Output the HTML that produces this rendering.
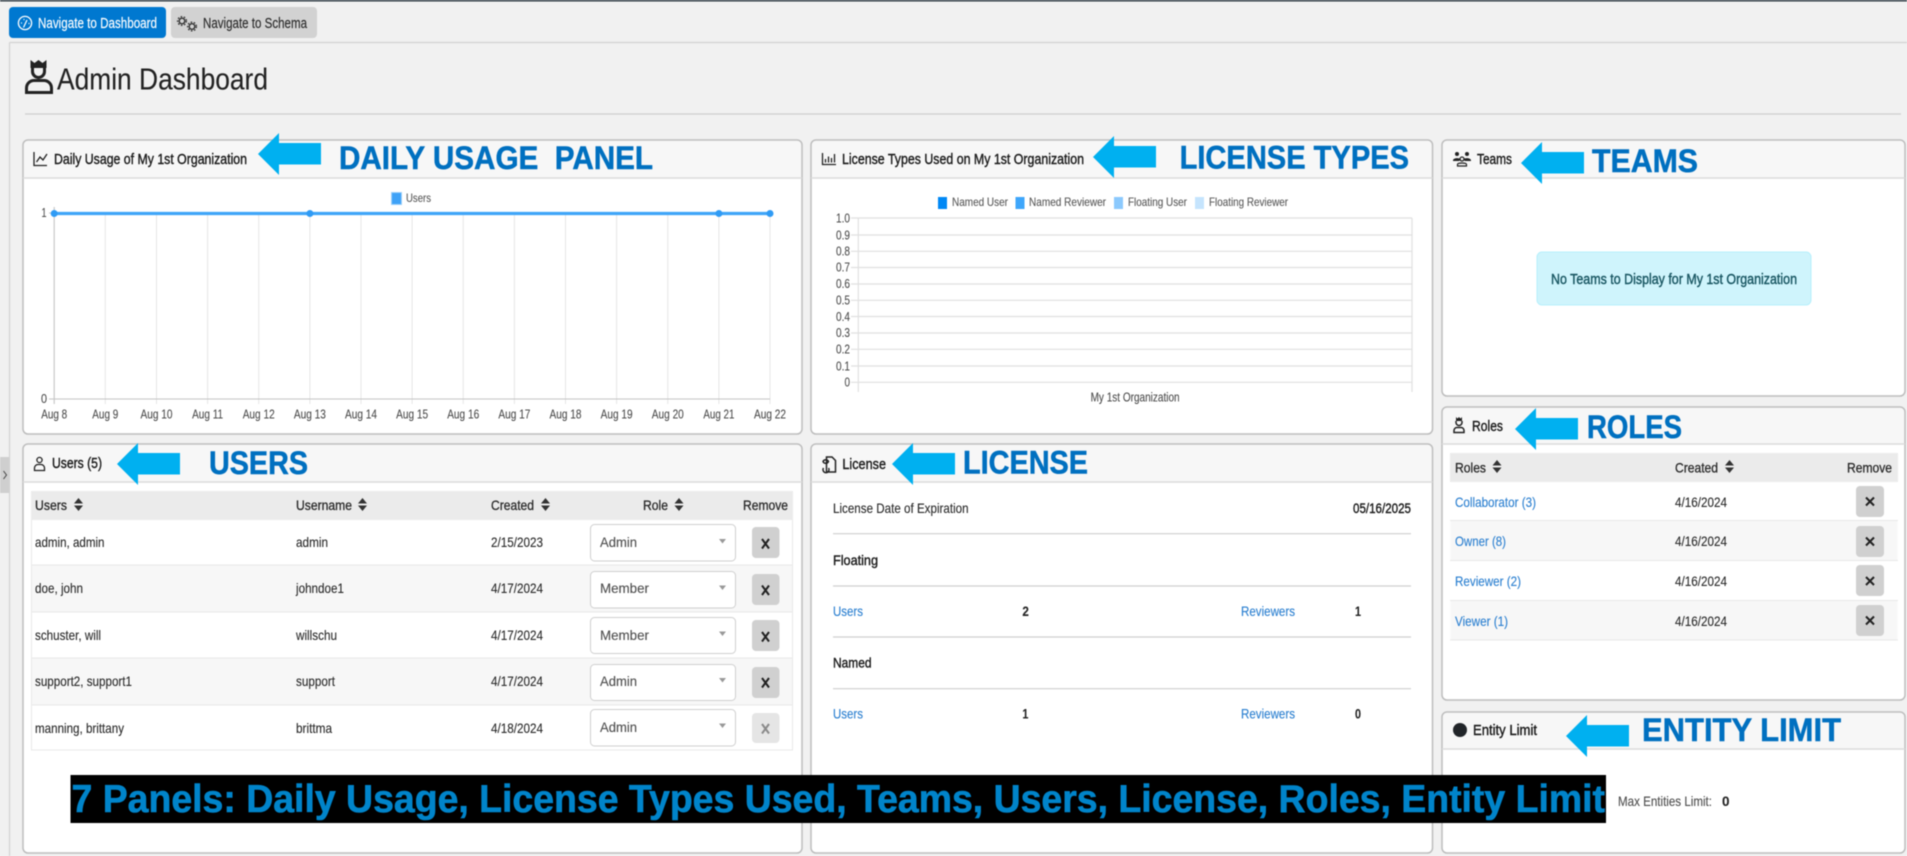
<!DOCTYPE html>
<html>
<head>
<meta charset="utf-8">
<title>Admin Dashboard</title>
<style>
html,body{margin:0;padding:0;width:1907px;height:856px;overflow:hidden;background:#f1f1f1}
svg{display:block;filter:blur(.4px)}
text{font-family:"Liberation Sans",Arial,sans-serif;font-size:14px;fill:#2b2b2b;stroke:#2b2b2b;stroke-width:.12px}
.t{font-size:14.5px;fill:#1c1c1c;stroke:#1c1c1c;stroke-width:.38px}
.nav{font-size:14.5px;stroke-width:.15px}
.lb{font-size:32px;font-weight:bold;fill:#0070c0;stroke:#0070c0;stroke-width:.5px}
.tk{font-size:12.5px;fill:#4d4d4d;stroke:#4d4d4d;stroke-width:.1px}
.tk2{font-size:12.5px;fill:#4d4d4d;stroke:#4d4d4d;stroke-width:.1px}
.th{font-size:14px;fill:#2b2b2b;stroke:#2b2b2b;stroke-width:.3px}
.a{fill:#2a7fd0;stroke:#2a7fd0}
.b{font-weight:bold;fill:#222}
.sel{fill:#4f4f4f;stroke:#4f4f4f}
.pb{fill:#fff;stroke:#bdbdbd;stroke-width:1.5}
.ph{fill:#f7f7f7}
.hl{stroke:#dcdcdc;stroke-width:1.5}
.g{stroke:#e6e6e6;stroke-width:1}
.g2{stroke:#e0e0e0;stroke-width:1.2}
.ic{fill:none;stroke:#222;stroke-width:1.3}
.x{stroke:#222;stroke-width:2}
.rl{stroke:#e9e9e9;stroke-width:1}
.hr{stroke:#cfcfcf;stroke-width:1.2}
.arrow{fill:#00b0f0}
</style>
</head>
<body>
<svg xmlns="http://www.w3.org/2000/svg" width="1907" height="856" viewBox="0 0 1907 856">
<rect width="1907" height="856" fill="#f1f1f1"/>
<rect width="1907" height="1.5" fill="#2f3a44"/>
<path d="M9.5 42.5H1907M9.5 42.5V856" stroke="#d2d2d2" stroke-width="1.2" fill="none"/>
<rect x="0" y="457" width="9" height="36" fill="#cfcfcf"/>
<path d="M3.5 471l3 4-3 4" fill="none" stroke="#444" stroke-width="1"/>

<!-- nav -->
<rect x="9" y="7" width="157" height="31" rx="4" fill="#0078d0"/>
<rect x="171" y="7" width="146" height="31" rx="4" fill="#d2d2d2"/>
<circle cx="25" cy="23" r="6.6" fill="none" stroke="#fff" stroke-width="1.3"/>
<path d="M23.500 27.500l3.500-7.500M21 23h1M23.500 19.500h1M28.500 23.500h1" stroke="#fff" stroke-width="1.2" fill="none"/>
<circle cx="182" cy="21" r="2.800" fill="none" stroke="#333" stroke-width="1.400"/>
<circle cx="182" cy="21" r="4.400" fill="none" stroke="#333" stroke-width="1.300" stroke-dasharray="1.600 1.600"/>
<circle cx="192" cy="26.500" r="2.800" fill="none" stroke="#333" stroke-width="1.400"/>
<circle cx="192" cy="26.500" r="4.400" fill="none" stroke="#333" stroke-width="1.300" stroke-dasharray="1.600 1.600"/>
<text class="nav" x="38" y="28" textLength="119" lengthAdjust="spacingAndGlyphs" style="fill:#fff;stroke:#fff">Navigate to Dashboard</text>
<text class="nav" x="203" y="28" textLength="104" lengthAdjust="spacingAndGlyphs">Navigate to Schema</text>

<!-- heading -->
<path d="M30.500 60l4 3 4-3 4 3 4-3v8h-16z" fill="#222"/>
<path d="M32.500 68v3.500a6 6 0 0 0 12 0V68" fill="none" stroke="#222" stroke-width="3"/>
<path d="M26.500 92.500V88a7.500 7.500 0 0 1 7.500-7.500h10a7.500 7.500 0 0 1 7.500 7.500v4.500z" fill="none" stroke="#222" stroke-width="3"/>
<text x="57" y="89.500" textLength="211" lengthAdjust="spacingAndGlyphs" style="font-size:31px;fill:#222;stroke:#222;stroke-width:.1px">Admin Dashboard</text>
<line x1="25" y1="114" x2="1901" y2="114" stroke="#cdcdcd" stroke-width="1.2"/>

<!-- Panel: daily usage -->
<rect class="pb" x="23" y="140" width="779" height="294" rx="5"/>
<path class="ph" d="M24 178V145a4 4 0 0 1 4-4H797a4 4 0 0 1 4 4V178z"/>
<line class="hl" x1="23" y1="178" x2="802" y2="178"/>
<path class="ic" d="M34 152V165.500H47M36.500 162l3.500-5 3 3 4-6"/>
<text class="t" x="54" y="164" textLength="193" lengthAdjust="spacingAndGlyphs">Daily Usage of My 1st Organization</text>
<rect x="391.500" y="192.500" width="10" height="12" fill="#3fa2f7" stroke="#9ed0f9"/>
<text x="406" y="202" textLength="25" lengthAdjust="spacingAndGlyphs" style="font-size:12px;fill:#5a5a5a;stroke:#5a5a5a">Users</text>
<g class="g">
<line x1="105.300" y1="213" x2="105.300" y2="404"/><line x1="156.500" y1="213" x2="156.500" y2="404"/><line x1="207.600" y1="213" x2="207.600" y2="404"/><line x1="258.700" y1="213" x2="258.700" y2="404"/><line x1="309.900" y1="213" x2="309.900" y2="404"/><line x1="361" y1="213" x2="361" y2="404"/><line x1="412.100" y1="213" x2="412.100" y2="404"/><line x1="463.200" y1="213" x2="463.200" y2="404"/><line x1="514.400" y1="213" x2="514.400" y2="404"/><line x1="565.500" y1="213" x2="565.500" y2="404"/><line x1="616.600" y1="213" x2="616.600" y2="404"/><line x1="667.800" y1="213" x2="667.800" y2="404"/><line x1="718.900" y1="213" x2="718.900" y2="404"/><line x1="770" y1="213" x2="770" y2="404"/>
</g>
<path d="M54.200 207V404M49 399H770M49 213H54" stroke="#c4c4c4" stroke-width="1.100" fill="none"/>
<line x1="54.200" y1="213.500" x2="770" y2="213.500" stroke="#3fa5f8" stroke-width="3.200"/>
<circle cx="54.200" cy="213.500" r="3.500" fill="#2f9bf5"/><circle cx="309.900" cy="213.500" r="3.500" fill="#2f9bf5"/><circle cx="718.900" cy="213.500" r="3.500" fill="#2f9bf5"/><circle cx="770" cy="213.500" r="3.500" fill="#2f9bf5"/>
<text class="tk" x="41.500" y="217" textLength="5" lengthAdjust="spacingAndGlyphs">1</text><text class="tk" x="41" y="403" textLength="6" lengthAdjust="spacingAndGlyphs">0</text>
<g text-anchor="middle">
<text class="tk" x="54.200" y="418.500" textLength="26" lengthAdjust="spacingAndGlyphs">Aug 8</text>
<text class="tk" x="105.300" y="418.500" textLength="26" lengthAdjust="spacingAndGlyphs">Aug 9</text>
<text class="tk" x="156.500" y="418.500" textLength="32" lengthAdjust="spacingAndGlyphs">Aug 10</text>
<text class="tk" x="207.600" y="418.500" textLength="31" lengthAdjust="spacingAndGlyphs">Aug 11</text>
<text class="tk" x="258.700" y="418.500" textLength="32" lengthAdjust="spacingAndGlyphs">Aug 12</text>
<text class="tk" x="309.900" y="418.500" textLength="32" lengthAdjust="spacingAndGlyphs">Aug 13</text>
<text class="tk" x="361" y="418.500" textLength="32" lengthAdjust="spacingAndGlyphs">Aug 14</text>
<text class="tk" x="412.100" y="418.500" textLength="32" lengthAdjust="spacingAndGlyphs">Aug 15</text>
<text class="tk" x="463.200" y="418.500" textLength="32" lengthAdjust="spacingAndGlyphs">Aug 16</text>
<text class="tk" x="514.400" y="418.500" textLength="32" lengthAdjust="spacingAndGlyphs">Aug 17</text>
<text class="tk" x="565.500" y="418.500" textLength="32" lengthAdjust="spacingAndGlyphs">Aug 18</text>
<text class="tk" x="616.600" y="418.500" textLength="32" lengthAdjust="spacingAndGlyphs">Aug 19</text>
<text class="tk" x="667.800" y="418.500" textLength="32" lengthAdjust="spacingAndGlyphs">Aug 20</text>
<text class="tk" x="718.900" y="418.500" textLength="31" lengthAdjust="spacingAndGlyphs">Aug 21</text>
<text class="tk" x="770" y="418.500" textLength="32" lengthAdjust="spacingAndGlyphs">Aug 22</text>
</g>

<!-- Panel: license types -->
<rect class="pb" x="811" y="140" width="621.500" height="294" rx="5"/>
<path class="ph" d="M812 178V145a4 4 0 0 1 4-4H1427.500a4 4 0 0 1 4 4V178z"/>
<line class="hl" x1="811" y1="178" x2="1432.500" y2="178"/>
<path class="ic" d="M822.500 153V164.500H836M825.500 162.500V159M828.500 162.500V156.500M831.500 162.500V158M834.500 162.500V154"/>
<text class="t" x="842" y="164" textLength="242" lengthAdjust="spacingAndGlyphs">License Types Used on My 1st Organization</text>
<rect x="938" y="197" width="9" height="12" fill="#0088f5"/>
<text x="952" y="206" textLength="56" lengthAdjust="spacingAndGlyphs" style="font-size:12px;fill:#5a5a5a;stroke:#5a5a5a">Named User</text>
<rect x="1015.500" y="197" width="9" height="12" fill="#3ea6fb"/>
<text x="1029" y="206" textLength="77" lengthAdjust="spacingAndGlyphs" style="font-size:12px;fill:#5a5a5a;stroke:#5a5a5a">Named Reviewer</text>
<rect x="1114" y="197" width="9" height="12" fill="#8bc9fd"/>
<text x="1128" y="206" textLength="59" lengthAdjust="spacingAndGlyphs" style="font-size:12px;fill:#5a5a5a;stroke:#5a5a5a">Floating User</text>
<rect x="1195" y="197" width="9" height="12" fill="#c5e4fd"/>
<text x="1209" y="206" textLength="79" lengthAdjust="spacingAndGlyphs" style="font-size:12px;fill:#5a5a5a;stroke:#5a5a5a">Floating Reviewer</text>
<g class="g2">
<line x1="851" y1="218" x2="1412" y2="218"/><line x1="851" y1="235" x2="1412" y2="235"/><line x1="851" y1="251.300" x2="1412" y2="251.300"/><line x1="851" y1="267.500" x2="1412" y2="267.500"/><line x1="851" y1="284" x2="1412" y2="284"/><line x1="851" y1="300.300" x2="1412" y2="300.300"/><line x1="851" y1="316.500" x2="1412" y2="316.500"/><line x1="851" y1="333" x2="1412" y2="333"/><line x1="851" y1="349.300" x2="1412" y2="349.300"/><line x1="851" y1="366" x2="1412" y2="366"/><line x1="851" y1="382.300" x2="1412" y2="382.300"/>
<line x1="858.300" y1="218" x2="858.300" y2="392"/><line x1="1412" y1="218" x2="1412" y2="392"/>
</g>
<text class="tk2" x="836" y="222.500" textLength="14" lengthAdjust="spacingAndGlyphs">1.0</text><text class="tk2" x="836" y="239.500" textLength="14" lengthAdjust="spacingAndGlyphs">0.9</text><text class="tk2" x="836" y="255.500" textLength="14" lengthAdjust="spacingAndGlyphs">0.8</text><text class="tk2" x="836" y="271.500" textLength="14" lengthAdjust="spacingAndGlyphs">0.7</text><text class="tk2" x="836" y="288" textLength="14" lengthAdjust="spacingAndGlyphs">0.6</text><text class="tk2" x="836" y="304.500" textLength="14" lengthAdjust="spacingAndGlyphs">0.5</text><text class="tk2" x="836" y="321" textLength="14" lengthAdjust="spacingAndGlyphs">0.4</text><text class="tk2" x="836" y="337" textLength="14" lengthAdjust="spacingAndGlyphs">0.3</text><text class="tk2" x="836" y="353.500" textLength="14" lengthAdjust="spacingAndGlyphs">0.2</text><text class="tk2" x="836" y="370.500" textLength="14" lengthAdjust="spacingAndGlyphs">0.1</text><text class="tk2" x="844.500" y="386.500" textLength="5.500" lengthAdjust="spacingAndGlyphs">0</text>
<text class="tk" x="1090.600" y="401.500" textLength="89" lengthAdjust="spacingAndGlyphs">My 1st Organization</text>

<!-- Panel: teams -->
<rect class="pb" x="1442" y="140" width="463" height="256" rx="5"/>
<path class="ph" d="M1443 178V145a4 4 0 0 1 4-4H1900a4 4 0 0 1 4 4V178z"/>
<line class="hl" x1="1442" y1="178" x2="1905" y2="178"/>
<g fill="#222"><circle cx="1457" cy="154" r="2"/><circle cx="1467" cy="154" r="2"/><path d="M1453 160.500c0-3 7-3 8-1l-2 1.500h-6zM1463 159.500c1-2 8-2 8 1v.5h-6z"/></g>
<circle cx="1462" cy="159" r="2" fill="none" stroke="#222" stroke-width="1.200"/>
<path d="M1457.500 166v-1.500c0-2 9-2 9 0v1.500z" fill="none" stroke="#222" stroke-width="1.200"/>
<text class="t" x="1477" y="164" textLength="35" lengthAdjust="spacingAndGlyphs">Teams</text>
<rect x="1537" y="252" width="274" height="53" rx="5" fill="#cff4fc" stroke="#b6effb"/>
<text x="1551" y="284" textLength="246" lengthAdjust="spacingAndGlyphs" style="font-size:14.500px;fill:#1a5763;stroke:#1a5763;stroke-width:.4px">No Teams to Display for My 1st Organization</text>

<!-- Panel: users -->
<rect class="pb" x="23" y="444" width="779" height="409" rx="5"/>
<path class="ph" d="M24 482V449a4 4 0 0 1 4-4H797a4 4 0 0 1 4 4V482z"/>
<line class="hl" x1="23" y1="482" x2="802" y2="482"/>
<circle cx="39.500" cy="460" r="2.600" class="ic"/>
<path class="ic" d="M34.500 470.500v-2.500a3.500 3.500 0 0 1 3.500-3.500h3a3.500 3.500 0 0 1 3.500 3.500v2.500z"/>
<text class="t" x="52" y="468" textLength="50" lengthAdjust="spacingAndGlyphs">Users (5)</text>
<rect x="31" y="491" width="762" height="29" fill="#ebebeb"/>
<rect x="31.500" y="565" width="761" height="47" fill="#f7f7f7"/>
<rect x="31.500" y="658" width="761" height="47" fill="#f7f7f7"/>
<g class="rl"><line x1="31" y1="565" x2="793" y2="565"/><line x1="31" y1="612" x2="793" y2="612"/><line x1="31" y1="658" x2="793" y2="658"/><line x1="31" y1="705" x2="793" y2="705"/><line x1="31" y1="750" x2="793" y2="750"/><line x1="31.500" y1="520" x2="31.500" y2="750"/><line x1="792.500" y1="520" x2="792.500" y2="750"/></g>
<text class="th" x="35" y="510" textLength="32" lengthAdjust="spacingAndGlyphs">Users</text>
<path d="M78.500 498l4.500 5.500h-9zM78.500 511l-4.500-5.500h9z" fill="#333"/>
<text class="th" x="296" y="510" textLength="56" lengthAdjust="spacingAndGlyphs">Username</text>
<path d="M362.500 498l4.500 5.500h-9zM362.500 511l-4.500-5.500h9z" fill="#333"/>
<text class="th" x="491" y="510" textLength="43" lengthAdjust="spacingAndGlyphs">Created</text>
<path d="M545.500 498l4.500 5.500h-9zM545.500 511l-4.500-5.500h9z" fill="#333"/>
<text class="th" x="643" y="510" textLength="25" lengthAdjust="spacingAndGlyphs">Role</text>
<path d="M679 498l4.500 5.500h-9zM679 511l-4.500-5.500h9z" fill="#333"/>
<text class="th" x="743" y="510" textLength="45" lengthAdjust="spacingAndGlyphs">Remove</text>

<text x="35" y="547" textLength="69.500" lengthAdjust="spacingAndGlyphs">admin, admin</text>
<text x="296" y="547" textLength="32" lengthAdjust="spacingAndGlyphs">admin</text>
<text x="491" y="547" textLength="52" lengthAdjust="spacingAndGlyphs">2/15/2023</text>
<text x="35" y="593" textLength="48" lengthAdjust="spacingAndGlyphs">doe, john</text>
<text x="296" y="593" textLength="48" lengthAdjust="spacingAndGlyphs">johndoe1</text>
<text x="491" y="593" textLength="52" lengthAdjust="spacingAndGlyphs">4/17/2024</text>
<text x="35" y="640" textLength="66" lengthAdjust="spacingAndGlyphs">schuster, will</text>
<text x="296" y="640" textLength="41" lengthAdjust="spacingAndGlyphs">willschu</text>
<text x="491" y="640" textLength="52" lengthAdjust="spacingAndGlyphs">4/17/2024</text>
<text x="35" y="686" textLength="97" lengthAdjust="spacingAndGlyphs">support2, support1</text>
<text x="296" y="686" textLength="39" lengthAdjust="spacingAndGlyphs">support</text>
<text x="491" y="686" textLength="52" lengthAdjust="spacingAndGlyphs">4/17/2024</text>
<text x="35" y="733" textLength="89" lengthAdjust="spacingAndGlyphs">manning, brittany</text>
<text x="296" y="733" textLength="36" lengthAdjust="spacingAndGlyphs">brittma</text>
<text x="491" y="733" textLength="52" lengthAdjust="spacingAndGlyphs">4/18/2024</text>

<g fill="#fff" stroke="#cfcfcf" stroke-width="1">
<rect x="590.500" y="524.500" width="145" height="36.500" rx="4"/>
<rect x="590.500" y="571.500" width="145" height="36.500" rx="4"/>
<rect x="590.500" y="617.500" width="145" height="36" rx="4"/>
<rect x="590.500" y="664.500" width="145" height="36" rx="4"/>
<rect x="590.500" y="709.500" width="145" height="36.500" rx="4"/>
</g>
<text class="sel" x="600" y="547" textLength="37" lengthAdjust="spacingAndGlyphs">Admin</text>
<text class="sel" x="600" y="593" textLength="49" lengthAdjust="spacingAndGlyphs">Member</text>
<text class="sel" x="600" y="640" textLength="49" lengthAdjust="spacingAndGlyphs">Member</text>
<text class="sel" x="600" y="686" textLength="37" lengthAdjust="spacingAndGlyphs">Admin</text>
<text class="sel" x="600" y="732" textLength="37" lengthAdjust="spacingAndGlyphs">Admin</text>
<g fill="#999"><path d="M719 539h7l-3.500 4.500z"/><path d="M719 585.500h7l-3.500 4.500z"/><path d="M719 631.500h7l-3.500 4.500z"/><path d="M719 678h7l-3.500 4.500z"/><path d="M719 723.500h7l-3.500 4.500z"/></g>
<g fill="#d0d0d0">
<rect x="752" y="527" width="27.500" height="31" rx="4"/>
<rect x="752" y="574" width="27.500" height="31" rx="4"/>
<rect x="752" y="620" width="27.500" height="31" rx="4"/>
<rect x="752" y="667" width="27.500" height="31" rx="4"/>
<rect x="752" y="713" width="27.500" height="30" rx="4" fill="#e5e5e5"/>
</g>
<g class="x">
<path d="M762 539l7 9.500M769 539l-7 9.500"/>
<path d="M762 585.500l7 9.500M769 585.500l-7 9.500"/>
<path d="M762 632l7 9.500M769 632l-7 9.500"/>
<path d="M762 678l7 9.500M769 678l-7 9.500"/>
<path d="M762 724l7 9.500M769 724l-7 9.500" style="stroke:#8a8a8a"/>
</g>

<!-- Panel: license -->
<rect class="pb" x="811" y="444" width="621.500" height="409" rx="5"/>
<path class="ph" d="M812 482V449a4 4 0 0 1 4-4H1427.500a4 4 0 0 1 4 4V482z"/>
<line class="hl" x1="811" y1="482" x2="1432.500" y2="482"/>
<path class="ic" d="M826.500 457h5.500l3.500 3.500V472h-9zM823 461.500a3 3 0 0 1 5.500 0 3 3 0 0 1-5.500 0zM823.500 468a3 3 0 1 0 5 0" style="stroke-width:1.500"/>
<text class="t" x="842.400" y="469" textLength="43.600" lengthAdjust="spacingAndGlyphs">License</text>
<text x="833" y="513" textLength="135.600" lengthAdjust="spacingAndGlyphs">License Date of Expiration</text>
<text x="1353" y="513" textLength="58" lengthAdjust="spacingAndGlyphs" style="fill:#1c1c1c;stroke:#1c1c1c;stroke-width:.4px">05/16/2025</text>
<line class="hr" x1="833" y1="533.700" x2="1411" y2="533.700"/>
<text x="833" y="565" textLength="45" lengthAdjust="spacingAndGlyphs" style="fill:#1c1c1c;stroke:#1c1c1c;stroke-width:.4px">Floating</text>
<line class="hr" x1="833" y1="586" x2="1411" y2="586"/>
<text class="a" x="833" y="616" textLength="30" lengthAdjust="spacingAndGlyphs">Users</text>
<text class="b" x="1022.400" y="616" textLength="6.500" lengthAdjust="spacingAndGlyphs">2</text>
<text class="a" x="1241" y="616" textLength="54" lengthAdjust="spacingAndGlyphs">Reviewers</text>
<text class="b" x="1355" y="616" textLength="6" lengthAdjust="spacingAndGlyphs">1</text>
<line class="hr" x1="833" y1="637" x2="1411" y2="637"/>
<text x="833" y="667.700" textLength="38.500" lengthAdjust="spacingAndGlyphs" style="fill:#1c1c1c;stroke:#1c1c1c;stroke-width:.4px">Named</text>
<line class="hr" x1="833" y1="688.700" x2="1411" y2="688.700"/>
<text class="a" x="833" y="718.700" textLength="30" lengthAdjust="spacingAndGlyphs">Users</text>
<text class="b" x="1022.400" y="718.700" textLength="6" lengthAdjust="spacingAndGlyphs">1</text>
<text class="a" x="1241" y="718.700" textLength="54" lengthAdjust="spacingAndGlyphs">Reviewers</text>
<text class="b" x="1355" y="718.700" textLength="6" lengthAdjust="spacingAndGlyphs">0</text>

<!-- Panel: roles -->
<rect class="pb" x="1442" y="407" width="463" height="293" rx="5"/>
<path class="ph" d="M1443 444V412a4 4 0 0 1 4-4H1900a4 4 0 0 1 4 4V444z"/>
<line class="hl" x1="1442" y1="444" x2="1905" y2="444"/>
<path d="M1456 417l1.500 1.500 1.500-1.500 1.500 1.500 1.500-1.500v4h-6z" fill="#222"/>
<path class="ic" d="M1456 421v1.500a3 3 0 0 0 6 0V421M1454 432.500v-2a3 3 0 0 1 3-3h4a3 3 0 0 1 3 3v2z" style="stroke-width:1.500"/>
<text class="t" x="1472" y="431" textLength="31" lengthAdjust="spacingAndGlyphs">Roles</text>
<rect x="1450" y="453" width="448" height="29" fill="#ebebeb"/>
<rect x="1450.500" y="520" width="447" height="40" fill="#f7f7f7"/>
<rect x="1450.500" y="600" width="447" height="40" fill="#f7f7f7"/>
<g class="rl"><line x1="1450" y1="520.500" x2="1898" y2="520.500"/><line x1="1450" y1="560.500" x2="1898" y2="560.500"/><line x1="1450" y1="600.500" x2="1898" y2="600.500"/><line x1="1450" y1="640" x2="1898" y2="640"/></g>
<text class="th" x="1455" y="472.500" textLength="31" lengthAdjust="spacingAndGlyphs">Roles</text>
<path d="M1497 460l4.500 5.500h-9zM1497 473l-4.500-5.500h9z" fill="#333"/>
<text class="th" x="1675" y="472.500" textLength="43" lengthAdjust="spacingAndGlyphs">Created</text>
<path d="M1729.500 460l4.500 5.500h-9zM1729.500 473l-4.500-5.500h9z" fill="#333"/>
<text class="th" x="1847" y="472.500" textLength="45" lengthAdjust="spacingAndGlyphs">Remove</text>
<text class="a" x="1455" y="507" textLength="81" lengthAdjust="spacingAndGlyphs">Collaborator (3)</text>
<text x="1675" y="507" textLength="52" lengthAdjust="spacingAndGlyphs">4/16/2024</text>
<text class="a" x="1455" y="546" textLength="51" lengthAdjust="spacingAndGlyphs">Owner (8)</text>
<text x="1675" y="546" textLength="52" lengthAdjust="spacingAndGlyphs">4/16/2024</text>
<text class="a" x="1455" y="586" textLength="66" lengthAdjust="spacingAndGlyphs">Reviewer (2)</text>
<text x="1675" y="586" textLength="52" lengthAdjust="spacingAndGlyphs">4/16/2024</text>
<text class="a" x="1455" y="626" textLength="53" lengthAdjust="spacingAndGlyphs">Viewer (1)</text>
<text x="1675" y="626" textLength="52" lengthAdjust="spacingAndGlyphs">4/16/2024</text>
<g fill="#d0d0d0">
<rect x="1856" y="486" width="28" height="31" rx="4"/>
<rect x="1856" y="526" width="28" height="31" rx="4"/>
<rect x="1856" y="565" width="28" height="31" rx="4"/>
<rect x="1856" y="605" width="28" height="31" rx="4"/>
</g>
<g class="x">
<path d="M1866 497.500l8 8M1874 497.500l-8 8"/>
<path d="M1866 537.500l8 8M1874 537.500l-8 8"/>
<path d="M1866 577l8 8M1874 577l-8 8"/>
<path d="M1866 616.500l8 8M1874 616.500l-8 8"/>
</g>

<!-- Panel: entity limit -->
<rect class="pb" x="1442" y="712" width="463" height="141" rx="5"/>
<path class="ph" d="M1443 749V717a4 4 0 0 1 4-4H1900a4 4 0 0 1 4 4V749z"/>
<line class="hl" x1="1442" y1="749" x2="1905" y2="749"/>
<circle cx="1460" cy="730" r="7" fill="#212529"/>
<text class="t" x="1473" y="735" textLength="64" lengthAdjust="spacingAndGlyphs">Entity Limit</text>
<text x="1618" y="806" textLength="94" lengthAdjust="spacingAndGlyphs" style="fill:#4f4f4f;stroke:#4f4f4f">Max Entities Limit:</text>
<text class="b" x="1722" y="806" textLength="7.500" lengthAdjust="spacingAndGlyphs">0</text>

<!-- arrows -->
<g class="arrow">
<polygon transform="translate(258 154)" points="0,0 21,-21 21,-11 63,-11 63,10.500 21,10.500 21,21"/>
<polygon transform="translate(1093 157)" points="0,0 21,-21 21,-11 63,-11 63,10.500 21,10.500 21,21"/>
<polygon transform="translate(1521 163)" points="0,0 21,-21 21,-11 63,-11 63,10.500 21,10.500 21,21"/>
<polygon transform="translate(1515 429)" points="0,0 21,-21 21,-11 63,-11 63,10.500 21,10.500 21,21"/>
<polygon transform="translate(1566 736)" points="0,0 21,-21 21,-11 63,-11 63,10.500 21,10.500 21,21"/>
<polygon transform="translate(117 464)" points="0,0 21,-21 21,-11 63,-11 63,10.500 21,10.500 21,21"/>
<polygon transform="translate(892 464)" points="0,0 21,-21 21,-11 63,-11 63,10.500 21,10.500 21,21"/>
</g>

<!-- labels -->
<text class="lb" x="339" y="169" textLength="314" lengthAdjust="spacingAndGlyphs" xml:space="preserve">DAILY USAGE  PANEL</text>
<text class="lb" x="1179.600" y="168.500" textLength="229.400" lengthAdjust="spacingAndGlyphs">LICENSE TYPES</text>
<text class="lb" x="1592" y="172" textLength="106" lengthAdjust="spacingAndGlyphs">TEAMS</text>
<text class="lb" x="1587" y="438" textLength="95" lengthAdjust="spacingAndGlyphs">ROLES</text>
<text class="lb" x="1642" y="741" textLength="199" lengthAdjust="spacingAndGlyphs">ENTITY LIMIT</text>
<text class="lb" x="209" y="474" textLength="99" lengthAdjust="spacingAndGlyphs">USERS</text>
<text class="lb" x="963" y="473.500" textLength="125" lengthAdjust="spacingAndGlyphs">LICENSE</text>

<!-- banner -->
<rect x="70.500" y="775" width="1535.500" height="48" fill="#000"/>
<text x="71.500" y="812" textLength="1533.500" lengthAdjust="spacingAndGlyphs" style="font-size:39px;font-weight:bold;fill:#0084ca;stroke:#0084ca;stroke-width:.6px">7 Panels: Daily Usage, License Types Used, Teams, Users, License, Roles, Entity Limit</text>
</svg>
</body>
</html>
